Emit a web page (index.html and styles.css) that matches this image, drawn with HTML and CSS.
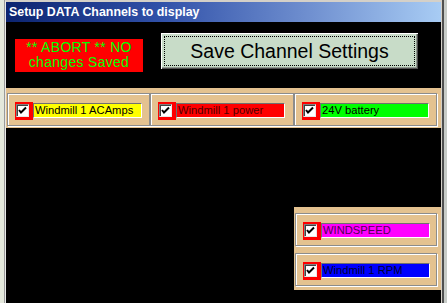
FILE: index.html
```html
<!DOCTYPE html>
<html lang="en">
<head>
    <meta charset="UTF-8">
    <title>Setup DATA Channels to display</title>
    <link rel="stylesheet" href="styles.css">
</head>
<body>
    <div class="screen">
        <div class="edge-left"></div>
        <div class="window">
            <div class="titlebar">Setup DATA Channels to display</div>
            <div class="client">
                <div class="top">
                    <div class="abort">** ABORT ** NO<br>changes Saved</div>
                    <button class="save" type="button">Save Channel Settings</button>
                </div>

                <div class="strip">
                    <div class="group">
                        <div class="chk"><span class="box"><svg width="9" height="9" viewBox="0 0 9 9"><path d="M1 4 L3 6.5 L8 1.5" stroke="#000" stroke-width="2" fill="none"/></svg></span></div>
                        <div class="lbl yellow">Windmill 1 ACAmps</div>
                    </div>
                    <div class="group">
                        <div class="chk"><span class="box"><svg width="9" height="9" viewBox="0 0 9 9"><path d="M1 4 L3 6.5 L8 1.5" stroke="#000" stroke-width="2" fill="none"/></svg></span></div>
                        <div class="lbl red">Windmill 1 power</div>
                    </div>
                    <div class="group">
                        <div class="chk"><span class="box"><svg width="9" height="9" viewBox="0 0 9 9"><path d="M1 4 L3 6.5 L8 1.5" stroke="#000" stroke-width="2" fill="none"/></svg></span></div>
                        <div class="lbl green">24V battery</div>
                    </div>
                </div>

                <div class="gap"></div>

                <div class="side">
                    <div class="group">
                        <div class="chk"><span class="box"><svg width="9" height="9" viewBox="0 0 9 9"><path d="M1 4 L3 6.5 L8 1.5" stroke="#000" stroke-width="2" fill="none"/></svg></span></div>
                        <div class="lbl magenta">WINDSPEED</div>
                    </div>
                    <div class="group">
                        <div class="chk"><span class="box"><svg width="9" height="9" viewBox="0 0 9 9"><path d="M1 4 L3 6.5 L8 1.5" stroke="#000" stroke-width="2" fill="none"/></svg></span></div>
                        <div class="lbl blue">Windmill 1 RPM</div>
                    </div>
                </div>
            </div>
        </div>
        <div class="edge-right"></div>
    </div>
</body>
</html>
```

FILE: styles.css
```css
body {
    margin: 0;
    background: #000;
    font-family: "Liberation Sans", Arial, sans-serif;
}
.screen {
    display: flex;
    height: 303px;
    overflow: hidden;
}
.edge-left {
    width: 4px;
    background: #e4e8dc;
    border-right: 1px solid #9a9a9a;
}
.window {
    width: 435px;
    border-left: 1px solid #e8e8e8;
    border-right: 1px solid #d4d0c8;
    border-top: 2px solid #d4d0c8;
    display: flex;
    flex-direction: column;
}
.edge-right {
    width: 3px;
    background: #c8ccc8;
    border-left: 2px solid #505050;
}
.titlebar {
    height: 20px;
    line-height: 20px;
    padding-left: 3px;
    color: #fff;
    font-weight: bold;
    font-size: 12.4px;
    background: linear-gradient(to right, #0c2470, #3050a8 35%, #7090d0 70%, #a8ccf4);
}
.client {
    flex: 1;
    background: #000;
}
.top {
    height: 66px;
    display: flex;
    align-items: flex-start;
    padding-top: 10px;
    padding-left: 9px;
    box-sizing: border-box;
}
.abort {
    margin-top: 7px;
    width: 128px;
    height: 33px;
    box-sizing: border-box;
    padding-top: 1px;
    background: #ff0000;
    color: #00ff00;
    font-size: 14px;
    line-height: 15px;
    letter-spacing: 0.3px;
    text-align: center;
}
.save {
    margin-left: 17px;
    width: 259px;
    height: 38px;
    background: #c8dcc8;
    border: 1px solid #000;
    box-shadow: inset 1px 1px #ffffff, inset -1px -1px #505050, inset -2px -2px #909890;
    outline: 1px dotted #000;
    outline-offset: -5px;
    font-family: "Liberation Sans", Arial, sans-serif;
    font-size: 19.5px;
    color: #000;
    padding: 0;
}
.strip {
    height: 40px;
    background: #e4c290;
    display: flex;
    padding: 5px 0 0 1px;
    box-sizing: border-box;
}
.strip .group:nth-child(2) {
    width: 144px;
}
.group {
    width: 143px;
    height: 33px;
    box-sizing: border-box;
    border: 1px solid #8c8c8c;
    box-shadow: inset 1px 1px #fff, 1px 1px #fff;
    display: flex;
    align-items: flex-start;
    padding: 8px 0 0 7px;
}
.chk {
    width: 18px;
    height: 18px;
    background: #ff0000;
    padding: 2px 0 0 1px;
    box-sizing: border-box;
}
.box {
    display: flex;
    align-items: center;
    justify-content: center;
    width: 13px;
    height: 13px;
    box-sizing: border-box;
    background: #fff;
    border-top: 1px solid #808080;
    border-left: 1px solid #808080;
    border-right: 1px solid #e8e8e8;
    border-bottom: 1px solid #e8e8e8;
    box-shadow: inset 1px 1px #404040;
}
.lbl {
    margin-top: 1px;
    width: 109px;
    height: 15px;
    box-sizing: border-box;
    border-top: 1px solid #707070;
    border-left: 1px solid #707070;
    border-right: 1px solid #fff;
    border-bottom: 1px solid #fff;
    padding-left: 1px;
    font-size: 11.2px;
    line-height: 13px;
    white-space: nowrap;
    overflow: hidden;
}
.yellow { background: #ffff00; color: #000; }
.red { background: #ff0000; color: #500000; }
.green { background: #00ff00; color: #000; }
.magenta { background: #ff00ff; color: #500050; }
.blue { background: #0000ff; color: #000030; }
.gap {
    height: 79px;
}
.side {
    margin-left: 288px;
    width: 147px;
    height: 83px;
    box-sizing: border-box;
    background: #e4c290;
    padding: 6px 0 0 1px;
    display: flex;
    flex-direction: column;
    gap: 7px;
}
.side .group {
    width: 142px;
}
```
